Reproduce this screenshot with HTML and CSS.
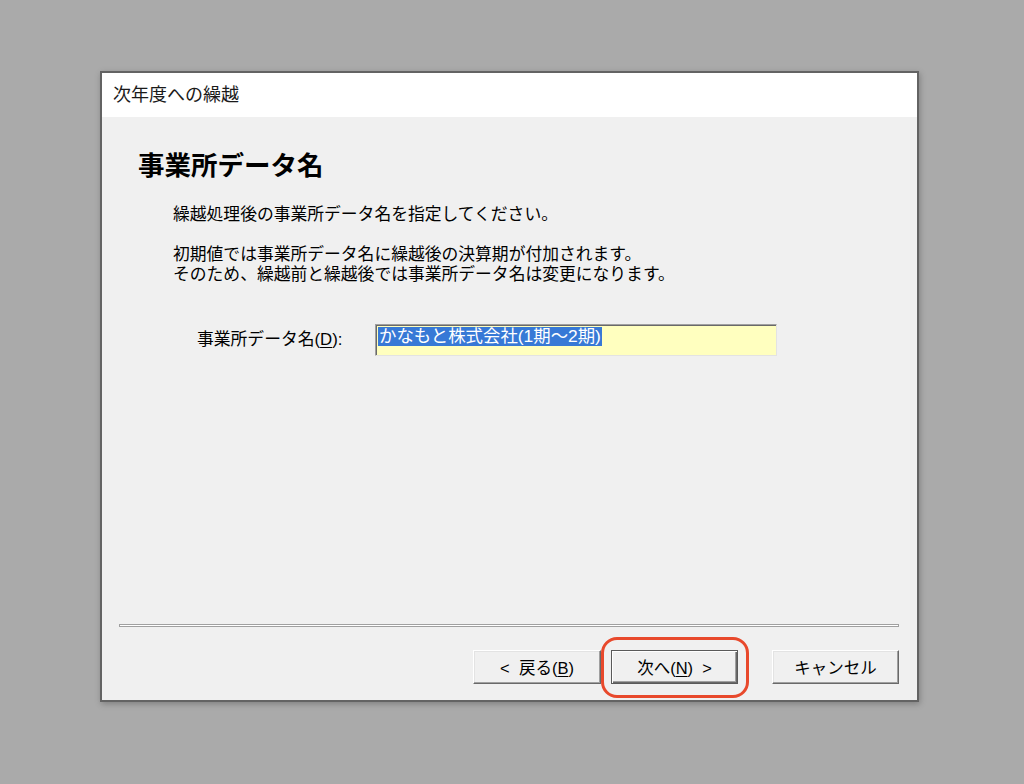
FILE: index.html
```html
<!DOCTYPE html>
<html lang="ja">
<head>
<meta charset="utf-8">
<title>次年度への繰越</title>
<link rel="stylesheet" href="styles.css">
</head>
<body>
<div class="window">
  <div class="titlebar">次年度への繰越</div>
  <div class="client">
    <div class="content">
      <h1 class="heading">事業所データ名</h1>
      <p class="desc">繰越処理後の事業所データ名を指定してください。</p>
      <div class="desc-block">
        <p class="desc desc-line">初期値では事業所データ名に繰越後の決算期が付加されます。</p>
        <p class="desc desc-line">そのため、繰越前と繰越後では事業所データ名は変更になります。</p>
      </div>
      <div class="field">
        <label class="field-label">事業所データ名(<u>D</u>):</label>
        <div class="input"><span class="sel">かなもと株式会社(1期～2期)</span></div>
      </div>
    </div>
    <div class="separator"></div>
    <div class="buttons">
      <button class="btn btn-back">&lt;&nbsp; 戻る(<u>B</u>)</button>
      <span class="highlight"><button class="btn btn-default">次へ(<u>N</u>)&nbsp; &gt;</button></span>
      <button class="btn btn-cancel">キャンセル</button>
    </div>
  </div>
</div>
</body>
</html>
```
FILE: styles.css
```css
html, body {
  margin: 0;
  padding: 0;
}
body {
  background: #aaaaaa;
  font-family: "Liberation Sans", "Noto Sans CJK JP", sans-serif;
  color: #000;
  padding: 71px 0 0 100px;
  height: 784px;
  box-sizing: border-box;
}
.window {
  width: 819px;
  height: 631px;
  box-sizing: border-box;
  border: 2px solid #636363;
  box-shadow: 1px 2px 6px rgba(0, 0, 0, 0.25);
  display: flex;
  flex-direction: column;
  background: #f0f0f0;
}
.titlebar {
  height: 44px;
  line-height: 44px;
  background: #ffffff;
  padding-left: 11px;
  font-size: 18px;
  color: #1a1a1a;
}
.client {
  flex: 1;
  display: flex;
  flex-direction: column;
  padding: 33px 18px 16px 17px;
}
.content {
  flex: 1;
}
.heading {
  margin: 0 0 0 19px;
  font-size: 26.5px;
  line-height: 32px;
  font-weight: 700;
}
.desc {
  margin: 23px 0 0 54px;
  font-size: 16.8px;
  line-height: 20px;
  font-weight: 400;
}
.desc-block {
  margin-top: 20px;
}
.desc-line {
  margin-top: 0;
}
.field {
  margin: 39px 0 0 78px;
  display: flex;
  align-items: center;
}
.field-label {
  width: 178px;
  font-size: 16.8px;
  line-height: 20px;
}
.field-label u, .btn u {
  text-underline-offset: 2px;
}
.input {
  width: 402px;
  height: 32px;
  box-sizing: border-box;
  background: #ffffbf;
  border-top: 1px solid #a0a0a0;
  border-left: 1px solid #a0a0a0;
  border-right: 1px solid #e3e3e3;
  border-bottom: 1px solid #e3e3e3;
  box-shadow: inset 1px 1px 0 #696969;
  padding: 2px 0 0 2px;
}
.sel {
  display: inline-block;
  background: #3779d6;
  color: #ffffff;
  font-size: 17.4px;
  line-height: 19px;
  height: 19px;
  padding: 0 1px;
}
.separator {
  height: 1px;
  border: 1px solid #a0a0a0;
  background: #ffffff;
  margin-bottom: 23px;
}
.buttons {
  display: flex;
  justify-content: flex-end;
  align-items: center;
}
.btn {
  width: 128px;
  height: 34px;
  box-sizing: border-box;
  font-family: "Liberation Sans", "Noto Sans CJK JP", sans-serif;
  font-size: 16.5px;
  color: #000;
  background: #f0f0f0;
  border-style: solid;
  border-width: 1px;
  border-color: #ffffff #696969 #696969 #ffffff;
  box-shadow: inset -1px -1px 0 #a0a0a0, inset 1px 1px 0 #e3e3e3;
  padding: 0;
  margin: 0;
}
.btn-back {
  margin-right: 10px;
}
.btn-default {
  width: 127px;
  border: 1px solid #5a5a5a;
  box-shadow: inset 1px 1px 0 #ffffff, inset -1px -1px 0 #696969, inset -2px -2px 0 #a0a0a0;
}
.btn-cancel {
  width: 127px;
}
.highlight {
  position: relative;
  display: inline-flex;
  margin-right: 34px;
}
.highlight::after {
  content: "";
  position: absolute;
  top: -13px;
  bottom: -14px;
  left: -10px;
  right: -11px;
  border: 3px solid #e8492c;
  border-radius: 16px;
  pointer-events: none;
}
```
